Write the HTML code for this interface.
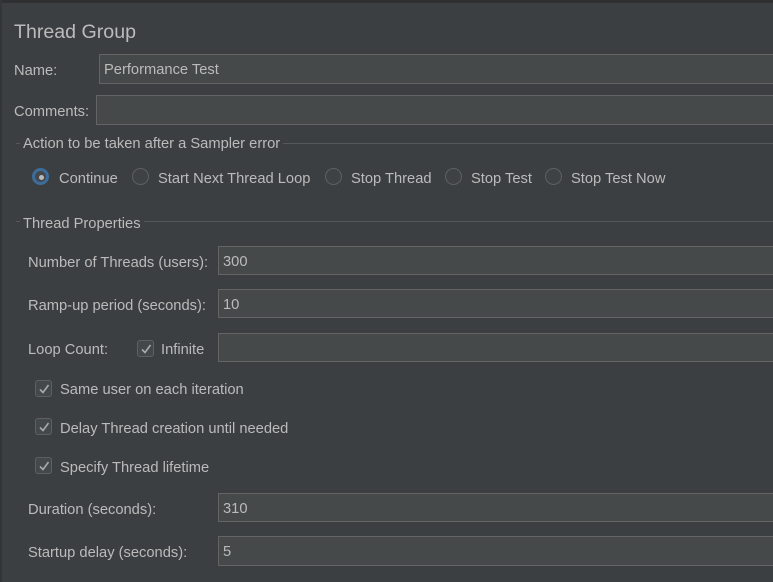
<!DOCTYPE html>
<html><head><style>
*{margin:0;padding:0;box-sizing:border-box}
body{width:773px;height:582px;overflow:hidden;background:#3c3f41;font-family:"Liberation Sans",sans-serif;font-size:14.7px;color:#bbbbbb;position:relative}
.a{position:absolute;white-space:nowrap;line-height:16px;margin-top:1px}
.in{position:absolute;background:#45494a;border:1px solid #646464;border-right:none;right:-2px;color:#bbb;padding-left:4px;padding-top:2px;line-height:26px}
.ln{position:absolute;height:1px;background:#555859;right:0}
.r{position:absolute;width:17px;height:17px;border-radius:50%;border:1px solid #5e6060;background:#3f4244}
.c{position:absolute;width:17px;height:17px;border-radius:3px;border:1px solid #5e6060;background:#43484a}
.c svg{position:absolute;left:2px;top:2px}
</style></head><body>
<div style="position:absolute;left:0;top:0;width:773px;height:3px;background:#2e3032"></div>
<div style="position:absolute;left:0;top:0;width:2px;height:582px;background:#333537"></div>
<div class="a" style="left:14px;top:20px;font-size:19.6px;line-height:22px">Thread Group</div>
<div class="a" style="left:14px;top:62px">Name:</div>
<div class="in" style="left:99px;top:54px;height:30px;padding-top:2px">Performance Test</div>
<div class="a" style="left:14px;top:103px">Comments:</div>
<div class="in" style="left:96px;top:95px;height:30px"></div>
<div class="ln" style="left:16px;top:143px"></div>
<div class="a" style="left:20px;top:135px;background:#3c3f41;padding:0 3px">Action to be taken after a Sampler error</div>
<div class="r" style="left:32px;top:168px;border:3px solid #3d6d9b;background:#44484a"><div style="position:absolute;left:4px;top:4px;width:5px;height:5px;border-radius:50%;background:#bbb"></div></div>
<div class="a" style="left:59px;top:170px">Continue</div>
<div class="r" style="left:132px;top:168px"></div><div class="a" style="left:158px;top:170px">Start Next Thread Loop</div>
<div class="r" style="left:325px;top:168px"></div><div class="a" style="left:351px;top:170px">Stop Thread</div>
<div class="r" style="left:445px;top:168px"></div><div class="a" style="left:471px;top:170px">Stop Test</div>
<div class="r" style="left:545px;top:168px"></div><div class="a" style="left:571px;top:170px">Stop Test Now</div>
<div class="ln" style="left:16px;top:221px"></div>
<div class="a" style="left:20px;top:215px;background:#3c3f41;padding:0 3px">Thread Properties</div>
<div class="a" style="left:28px;top:254px">Number of Threads (users):</div>
<div class="in" style="left:218px;top:246px;height:29px">300</div>
<div class="a" style="left:28px;top:297px">Ramp-up period (seconds):</div>
<div class="in" style="left:218px;top:289px;height:29px">10</div>
<div class="a" style="left:28px;top:341px">Loop Count:</div>
<div class="c" style="left:137px;top:340px"><svg width="12" height="12"><path d="M2 6.5 L5 9.5 L10.5 2" stroke="#aaa" stroke-width="1.6" fill="none"/></svg></div>
<div class="a" style="left:161px;top:341px">Infinite</div>
<div class="in" style="left:218px;top:333px;height:29px"></div>
<div class="c" style="left:35px;top:380px"><svg width="12" height="12"><path d="M2 6.5 L5 9.5 L10.5 2" stroke="#aaa" stroke-width="1.6" fill="none"/></svg></div>
<div class="a" style="left:60px;top:381px">Same user on each iteration</div>
<div class="c" style="left:35px;top:418px"><svg width="12" height="12"><path d="M2 6.5 L5 9.5 L10.5 2" stroke="#aaa" stroke-width="1.6" fill="none"/></svg></div>
<div class="a" style="left:60px;top:420px">Delay Thread creation until needed</div>
<div class="c" style="left:35px;top:457px"><svg width="12" height="12"><path d="M2 6.5 L5 9.5 L10.5 2" stroke="#aaa" stroke-width="1.6" fill="none"/></svg></div>
<div class="a" style="left:60px;top:459px">Specify Thread lifetime</div>
<div class="a" style="left:28px;top:501px">Duration (seconds):</div>
<div class="in" style="left:218px;top:493px;height:29px">310</div>
<div class="a" style="left:28px;top:544px">Startup delay (seconds):</div>
<div class="in" style="left:218px;top:536px;height:30px">5</div>
</body></html>
